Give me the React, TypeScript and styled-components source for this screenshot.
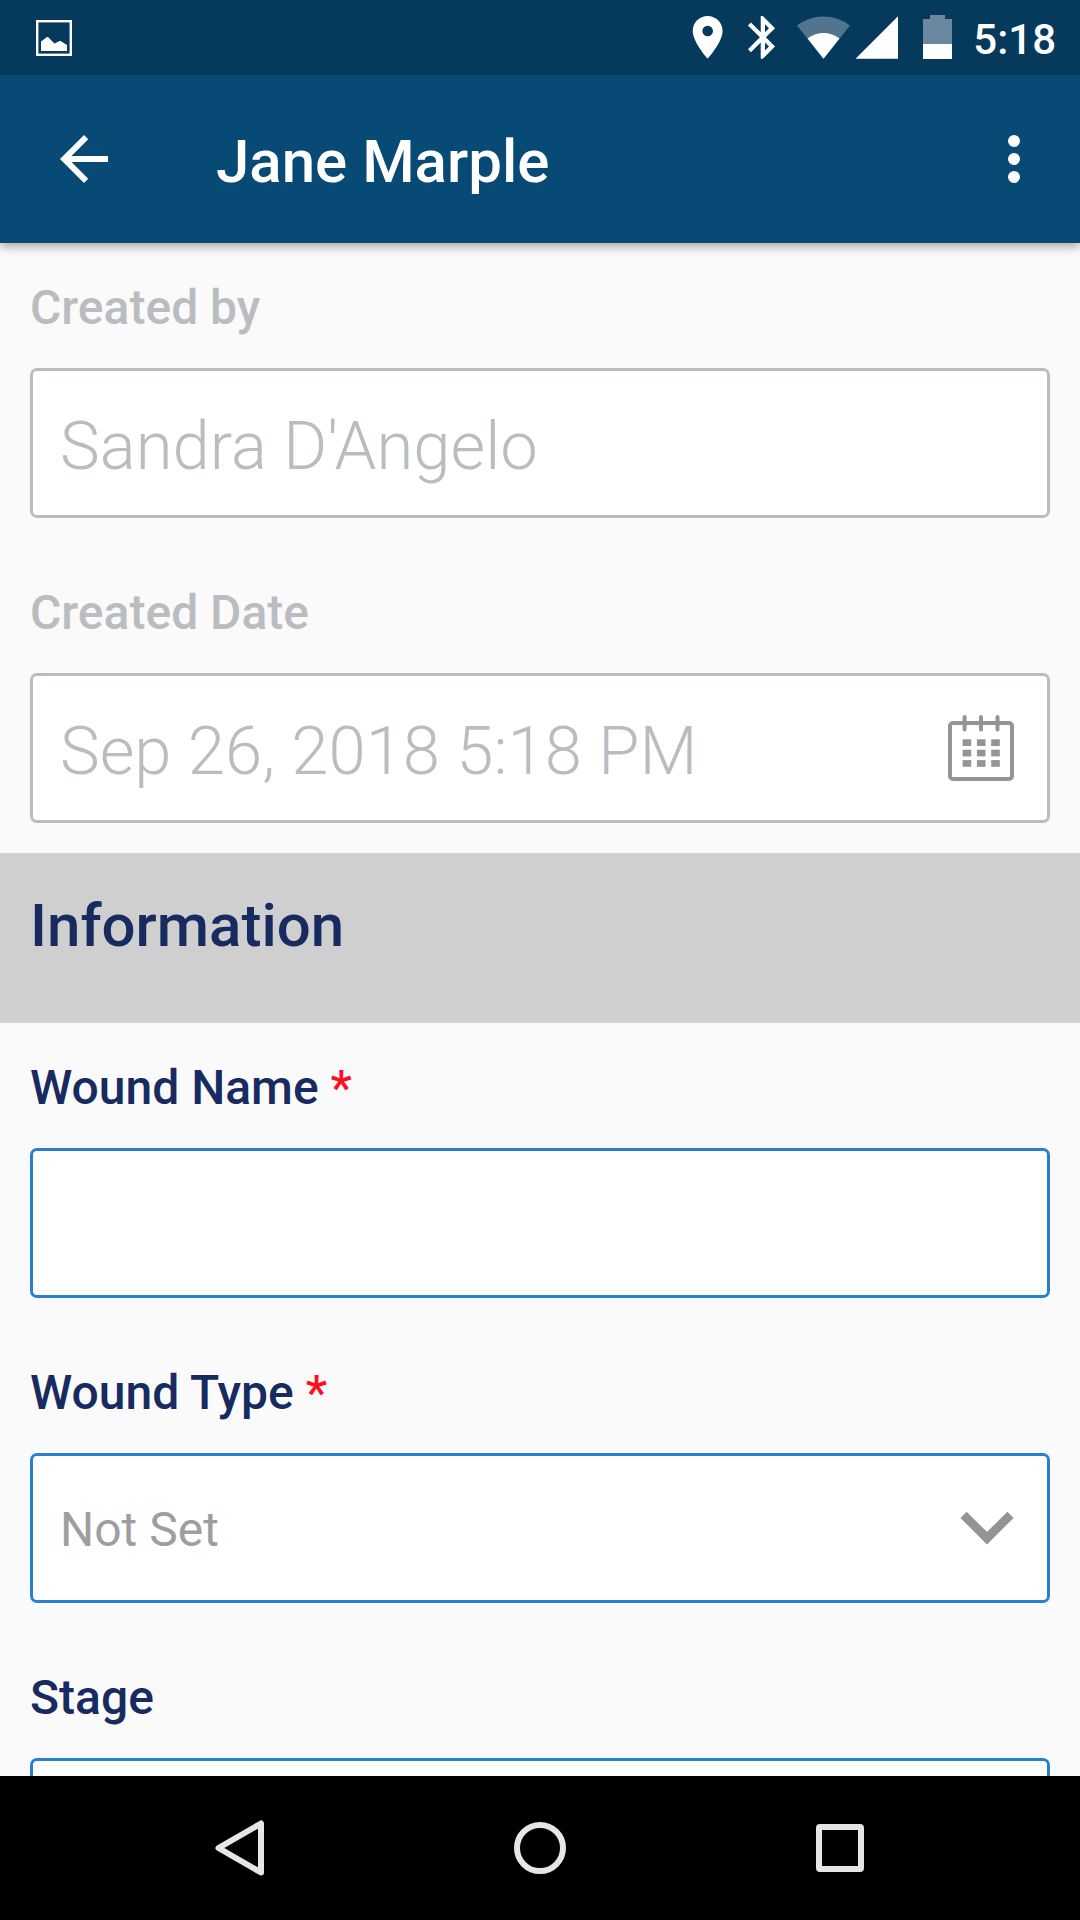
import React, { useState } from "react";
import styled, { createGlobalStyle } from "styled-components";

const color = {
  statusBar: "#053a5c",
  appBar: "#064a75",
  page: "#fafafa",
  band: "#cfcfcf",
  navy: "#172b61",
  blue: "#2980d1",
  muted: "#b9bdc2",
  placeholder: "#9e9e9e",
  icon: "#949494",
  required: "#ff0f1e",
  navIcon: "#e6e6e6",
};

const GlobalStyle = createGlobalStyle`
  *, *::before, *::after { box-sizing: border-box; }
  body {
    margin: 0;
    background: ${color.page};
    font-family: Roboto, "Noto Sans", sans-serif;
  }
  svg { display: block; }
`;

const Screen = styled.div`
  display: flex;
  flex-direction: column;
  height: 100vh;
  overflow: hidden;
`;

const StatusBar = styled.div`
  flex: none;
  display: flex;
  align-items: center;
  justify-content: space-between;
  height: 75px;
  padding: 0 24px 0 36px;
  background: ${color.statusBar};
  color: #fff;
`;

const StatusIcons = styled.div`
  display: flex;
  align-items: center;
`;

const Clock = styled.time`
  margin-left: 19px;
  padding-top: 5px;
  font-size: 42px;
  line-height: 46px;
  font-weight: 500;
`;

const AppBar = styled.header`
  position: relative;
  z-index: 1;
  flex: none;
  display: flex;
  align-items: center;
  height: 168px;
  padding: 0 30px 0 48px;
  background: ${color.appBar};
  color: #fff;
  box-shadow: 0 4px 9px rgba(0, 0, 0, 0.32);
`;

const Title = styled.h1`
  flex: 1;
  margin: 0;
  padding: 6px 0 0 96px;
  font-size: 60px;
  line-height: 70px;
  font-weight: 500;
`;

const IconButton = styled.button`
  display: flex;
  padding: 0;
  border: 0;
  background: none;
  color: inherit;
`;

const Form = styled.form`
  flex: 1;
  min-height: 0;
  overflow-y: auto;
  scrollbar-width: none;
`;

const Field = styled.div`
  display: flex;
  flex-direction: column;
  gap: 32px;
  padding: 37px 30px 30px;
`;

const Label = styled.label<{ $muted?: boolean }>`
  font-size: 48px;
  line-height: 56px;
  font-weight: 500;
  color: ${(p) => (p.$muted ? color.muted : color.navy)};
`;

const Required = styled.span`
  color: ${color.required};
`;

const Box = styled.div<{ $muted?: boolean }>`
  display: grid;
  grid-template-columns: minmax(0, 1fr);
  align-items: center;
  height: 150px;
  border: 3px solid ${(p) => (p.$muted ? color.muted : color.blue)};
  border-radius: 7px;
  background: #fff;
  overflow: hidden;

  > * {
    grid-area: 1 / 1;
  }
`;

const TextInput = styled.input`
  width: 100%;
  height: 100%;
  padding: 6px 27px 0;
  border: 0;
  outline: 0;
  background: none;
  font: 300 67px Roboto, "Noto Sans", sans-serif;
  color: ${color.navy};

  &:disabled {
    color: ${color.muted};
  }
`;

const Select = styled.select`
  width: 100%;
  height: 100%;
  padding: 3px 27px 0;
  border: 0;
  outline: 0;
  appearance: none;
  background: none;
  font: 400 48px Roboto, "Noto Sans", sans-serif;
  color: ${color.placeholder};
`;

const CalendarButton = styled(IconButton)`
  justify-self: end;
  margin-right: 33px;
  color: ${color.icon};
`;

const Chevron = styled.svg`
  justify-self: end;
  margin-right: 33px;
  color: ${color.icon};
  pointer-events: none;
`;

const SectionHeading = styled.h2`
  margin: 0;
  padding: 38px 30px 62px;
  background: ${color.band};
  font-size: 60px;
  line-height: 70px;
  font-weight: 500;
  color: ${color.navy};
`;

const NavBar = styled.nav`
  flex: none;
  display: flex;
  height: 144px;
  padding: 0 90px;
  background: #000;
`;

const NavButton = styled(IconButton)`
  flex: 1;
  align-items: center;
  justify-content: center;
  color: ${color.navIcon};
`;

const PictureIcon = () => (
  <svg width="36" height="36" viewBox="0 0 36 36" aria-hidden="true">
    <rect x="1.2" y="1.2" width="33.6" height="33.6" fill="none" stroke="#fff" strokeWidth="2.4" />
    <path d="M5 21.5 11 17h1l6.5 6.5 5-2.5h1l6.5 4V31H5z" fill="#fff" />
  </svg>
);

const SystemIcons = () => (
  <svg width="262" height="51" viewBox="692 12 262 51" aria-hidden="true">
    <g fill="#fff">
      <path
        transform="translate(682.1 11.8) scale(2.13)"
        d="M12 2C8.13 2 5 5.13 5 9c0 5.25 7 13 7 13s7-7.75 7-13c0-3.87-3.13-7-7-7zm0 9.5a2.5 2.5 0 1 1 0-5 2.5 2.5 0 0 1 0 5z"
      />
      <path
        transform="translate(737.3 11.8) scale(2.13)"
        d="M17.71 7.71 12 2h-1v7.59L6.41 5 5 6.41 10.59 12 5 17.59 6.41 19 11 14.41V22h1l5.71-5.71-4.3-4.29 4.3-4.29zM13 5.83l1.88 1.88L13 9.59V5.83zm1.88 10.46L13 18.17v-3.76l1.88 1.88z"
      />
      <path d="M823.5 58.7 797 25.5Q809 16.5 823.5 16.5T850 25.5z" opacity=".3" />
      <path d="M823.5 58.7 807.5 38.6Q814.5 33 823.5 33t16 5.6z" />
      <path d="M855.5 58.8H898V16.2z" />
      <path d="M930 15h15v4h7v25h-29V19h7z" opacity=".4" />
      <path d="M923 44h29v15h-29z" />
    </g>
  </svg>
);

const BackArrow = () => (
  <svg width="72" height="72" viewBox="0 0 24 24" fill="currentColor" aria-hidden="true">
    <path d="M20 11H7.83l5.59-5.59L12 4l-8 8 8 8 1.41-1.41L7.83 13H20v-2z" />
  </svg>
);

const MoreDots = () => (
  <svg width="72" height="72" viewBox="0 0 24 24" fill="currentColor" aria-hidden="true">
    <circle cx="12" cy="6" r="2" />
    <circle cx="12" cy="12" r="2" />
    <circle cx="12" cy="18" r="2" />
  </svg>
);

const CalendarIcon = () => (
  <svg width="66" height="66" viewBox="0 0 66 66" aria-hidden="true">
    <rect x="2" y="8" width="62" height="56" rx="3" fill="none" stroke="currentColor" strokeWidth="4" />
    <path d="M16.6 2v12.6M33 2v12.6M49.5 2v12.6" stroke="currentColor" strokeWidth="4" strokeLinecap="round" />
    <g fill="currentColor">
      {[24.3, 34.7, 45.1].map((y) =>
        [14.6, 28.9, 43.2].map((x) => <rect key={`${x}-${y}`} x={x} y={y} width="8.6" height="6.7" />)
      )}
    </g>
  </svg>
);

const ChevronIcon = () => (
  <Chevron width="54" height="34" viewBox="0 0 54 34" aria-hidden="true">
    <path d="M3.5 3.8 27 27.2 50.5 3.8" fill="none" stroke="currentColor" strokeWidth="8.8" />
  </Chevron>
);

function Choice({ id, label, required }: { id: string; label: string; required?: boolean }) {
  return (
    <Field>
      <Label htmlFor={id}>
        {label}
        {required && <Required> *</Required>}
      </Label>
      <Box>
        <Select id={id} required={required} defaultValue="">
          <option value="">Not Set</option>
        </Select>
        <ChevronIcon />
      </Box>
    </Field>
  );
}

export default function App() {
  const [woundName, setWoundName] = useState("");

  return (
    <>
      <GlobalStyle />
      <Screen>
        <StatusBar>
          <PictureIcon />
          <StatusIcons>
            <SystemIcons />
            <Clock>5:18</Clock>
          </StatusIcons>
        </StatusBar>

        <AppBar>
          <IconButton type="button" aria-label="Back">
            <BackArrow />
          </IconButton>
          <Title>Jane Marple</Title>
          <IconButton type="button" aria-label="More options">
            <MoreDots />
          </IconButton>
        </AppBar>

        <Form>
          <Field>
            <Label htmlFor="created-by" $muted>Created by</Label>
            <Box $muted>
              <TextInput id="created-by" type="text" value="Sandra D'Angelo" disabled />
            </Box>
          </Field>
          <Field>
            <Label htmlFor="created-date" $muted>Created Date</Label>
            <Box $muted>
              <TextInput id="created-date" type="text" value="Sep 26, 2018 5:18 PM" disabled />
              <CalendarButton type="button" aria-label="Choose date" disabled>
                <CalendarIcon />
              </CalendarButton>
            </Box>
          </Field>

          <SectionHeading>Information</SectionHeading>

          <Field>
            <Label htmlFor="wound-name">
              Wound Name<Required> *</Required>
            </Label>
            <Box>
              <TextInput
                id="wound-name"
                type="text"
                required
                value={woundName}
                onChange={(e) => setWoundName(e.target.value)}
              />
            </Box>
          </Field>
          <Choice id="wound-type" label="Wound Type" required />
          <Choice id="stage" label="Stage" />
        </Form>

        <NavBar aria-label="System">
          <NavButton type="button" aria-label="Back">
            <svg width="50" height="56" viewBox="0 0 50 56" aria-hidden="true">
              <path d="M46 3.5v49L3.5 28z" fill="none" stroke="currentColor" strokeWidth="6" strokeLinejoin="round" />
            </svg>
          </NavButton>
          <NavButton type="button" aria-label="Home">
            <svg width="52" height="52" viewBox="0 0 52 52" aria-hidden="true">
              <circle cx="26" cy="26" r="23" fill="none" stroke="currentColor" strokeWidth="6" />
            </svg>
          </NavButton>
          <NavButton type="button" aria-label="Recent apps">
            <svg width="48" height="48" viewBox="0 0 48 48" aria-hidden="true">
              <path
                fill="currentColor"
                fillRule="evenodd"
                d="M4 0h40a4 4 0 0 1 4 4v40a4 4 0 0 1-4 4H4a4 4 0 0 1-4-4V4a4 4 0 0 1 4-4zM6 6v36h36V6z"
              />
            </svg>
          </NavButton>
        </NavBar>
      </Screen>
    </>
  );
}
